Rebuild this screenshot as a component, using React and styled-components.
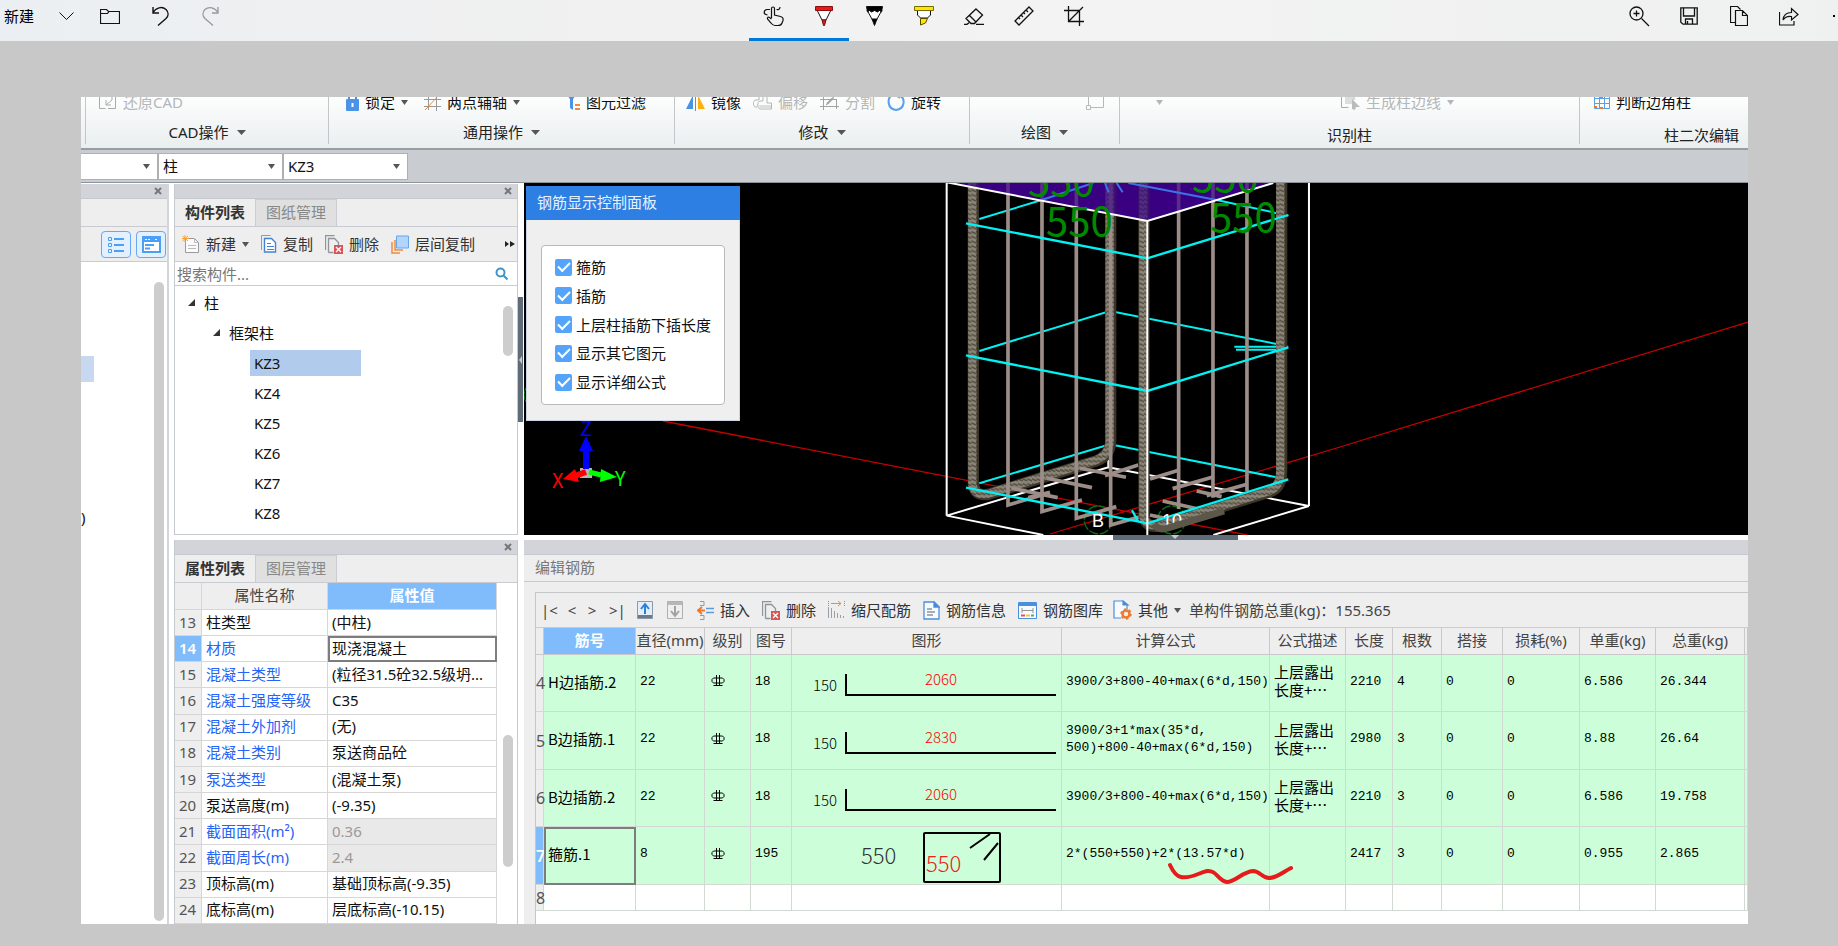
import React from 'react';
import styled, { createGlobalStyle, css } from 'styled-components';

const GlobalStyle = createGlobalStyle`
  * {
    box-sizing: border-box;
  }

  body {
    margin: 0;
    background: #c8c8c8;
    color: #111;
    font-family: 'Noto Sans', 'Noto Sans CJK SC', sans-serif;
    font-size: 15px;
    line-height: 20px;
  }

  button, input, select {
    font: inherit;
    color: inherit;
    margin: 0;
    padding: 0;
    border: 0;
    background: none;
  }

  button {
    white-space: nowrap;
  }

  svg {
    display: block;
    flex: none;
  }
`;

/* ---------- top application bar ---------- */

const AppBar = styled.header`
  display: grid;
  grid-template-columns: minmax(0, 1fr) auto minmax(0, 1fr);
  height: 41px;
  overflow: hidden;
  background: linear-gradient(90deg, #ebeff3 0, #f0f0f0 30%, #f3f3f3 60%, #eff0f0 100%);
`;

const BarGroup = styled.div`
  display: flex;
  justify-content: ${(p) => p.$align || 'flex-start'};
  padding-left: ${(p) => p.$pad || 0}px;
`;

const BarButton = styled.button`
  width: ${(p) => p.$width || 50}px;
  height: 41px;
  padding-bottom: 9px;
  display: flex;
  align-items: center;
  justify-content: center;
`;

const NewButton = styled(BarButton)`
  justify-content: flex-start;
  padding: 0 0 10px 4px;
  color: #000;
`;

const ActivePair = styled.div`
  display: flex;
  height: 41px;
  border-bottom: 3px solid #0078d7;
`;

const MoreButton = styled(BarButton)`
  justify-content: flex-start;
  padding-left: 19px;
  overflow: hidden;
`;

/* ---------- page and ribbon ---------- */

const Canvas = styled.main`
  padding: 56px 90px 22px 81px;
`;

const Sheet = styled.div`
  background: #fff;
  overflow: hidden;
`;

const Ribbon = styled.div`
  display: grid;
  grid-template-columns: 5px 243fr 346fr 295fr 150fr 460fr 168fr;
  height: 53px;
  overflow: hidden;
  border-bottom: 2px solid #999da2;
  background: linear-gradient(#fdfefe, #e9eeee);
`;

const RibbonGroup = styled.section`
  display: flex;
  flex-direction: column;
  justify-content: flex-end;
  gap: 4px;
  height: 47px;
  min-width: 0;
  border-right: ${(p) => (p.$last ? 0 : 1)}px solid #c3c6c8;
`;

const ToolRow = styled.div`
  display: flex;
  align-items: center;
  flex: none;
  height: 28px;
  padding-left: ${(p) => p.$pad}px;
  gap: ${(p) => p.$gap || 0}px;
`;

const RibbonTool = styled.button`
  display: flex;
  align-items: center;
  gap: 6px;
  color: ${(p) => (p.disabled ? '#b4b6b8' : '#111')};
`;

const GroupLabel = styled.div`
  display: flex;
  align-items: center;
  justify-content: ${(p) => p.$align || 'center'};
  flex: none;
  gap: 8px;
  height: 24px;
  padding-top: ${(p) => (p.$low ? 5 : 0)}px;
  padding-right: ${(p) => (p.$align ? 9 : 0)}px;
  white-space: nowrap;
  color: #222;
`;

const ComboBar = styled.div`
  display: flex;
  height: 33px;
  padding-top: 3px;
  background: #c9ccd1;
  border-bottom: 1px solid #8d9499;
`;

const Combo = styled.label`
  display: grid;
  align-items: center;
  width: ${(p) => p.$width}px;
  height: 27px;
  background: #fff;
  border: 1px solid #b0b0b0;
  border-left-width: ${(p) => (p.$first ? 0 : 1)}px;

  select, svg {
    grid-area: 1 / 1;
  }

  select {
    appearance: none;
    padding: 0 0 2px 4px;
    height: 25px;
    outline: 0;
  }

  svg {
    justify-self: end;
    margin-right: 7px;
    pointer-events: none;
  }
`;

/* ---------- docked panels ---------- */

const Workspace = styled.div`
  display: grid;
  grid-template-columns: 93px 344px 6px minmax(0, 1fr);
`;

const Column = styled.div`
  display: flex;
  flex-direction: column;
  min-width: 0;
  padding-top: ${(p) => (p.$flush ? 0 : 1)}px;
`;

const SidePanel = styled.section`
  flex: 1;
  display: flex;
  flex-direction: column;
  margin-right: 5px;
  border-right: 2px solid #d3d5da;
`;

const PanelTitle = styled.div`
  display: flex;
  align-items: center;
  justify-content: flex-end;
  height: 15px;
  padding-right: 5px;
  background: #d2d4da;
  border-bottom: 1px solid #c6c8cd;
`;

const Panel = styled.section`
  display: flex;
  flex-direction: column;
  border: 1px solid #c6c9ce;
  border-width: 0 1px;
  background: #fff;
`;

const TabStrip = styled.div`
  display: flex;
  height: 28px;
  background: #eee;
  border-bottom: 1px solid #c9cbd0;
`;

const Tab = styled.button`
  width: ${(p) => (p.$active ? 80 : 82)}px;
  padding-bottom: 2px;
  font-weight: ${(p) => (p.$active ? 600 : 400)};
  color: ${(p) => (p.$active ? '#333' : '#888')};
  background: ${(p) => (p.$active ? '#eee' : '#e0e0e0')};
  border: solid #cbcdd2;
  border-width: ${(p) => (p.$active ? 0 : '1px 1px 0 1px')};
`;

const PanelTools = styled.div`
  display: flex;
  align-items: center;
  height: 35px;
  padding: 0 4px 0 7px;
  background: #eee;
  border-bottom: 1px solid #c9cbd0;
`;

const PanelTool = styled.button`
  display: flex;
  align-items: center;
  gap: 6px;
  margin-right: ${(p) => p.$after ?? 12}px;
  color: #333;
`;

const ViewToggle = styled.button`
  width: 30px;
  height: 27px;
  margin-right: 5px;
  display: flex;
  align-items: center;
  justify-content: center;
  background: #e3f0ff;
  border: 1px solid #62aaf5;
  border-radius: 4px;
`;

const SideBody = styled.div`
  flex: 1;
  display: flex;
  justify-content: space-between;
  padding: 20px 3px 3px 0;
`;

const SideList = styled.div`
  overflow: hidden;
  padding-top: 74px;
`;

const SideSelected = styled.div`
  width: 13px;
  height: 26px;
  margin-bottom: 125px;
  background: #c8d8f0;
`;

const Thumb = styled.div`
  width: 10px;
  height: ${(p) => p.$height};
  margin-top: ${(p) => p.$top || 0}px;
  flex: none;
  border-radius: 5px;
  background: #cdcdcd;
`;

const SearchRow = styled.label`
  display: flex;
  align-items: center;
  height: 24px;
  padding: 0 9px 0 2px;
  border-bottom: 1px solid #c9cbd0;

  input {
    flex: 1;
    min-width: 0;
    outline: 0;
  }

  input::placeholder {
    color: #777;
    opacity: 1;
  }
`;

const TreeArea = styled.div`
  display: flex;
  justify-content: space-between;
  height: 249px;
  padding: 2px 4px 6px 0;
  border-bottom: 1px solid #c9cbd0;
`;

const Tree = styled.ul`
  list-style: none;
  margin: 0;
  padding: 0;
`;

const TreeRow = styled.li`
  display: flex;
  align-items: center;
  gap: 8px;
  height: 30px;
  padding-left: ${(p) => p.$indent}px;
`;

const TreeLeaf = styled.button`
  width: 111px;
  height: 26px;
  padding-left: 4px;
  text-align: left;
  background: ${(p) => (p.$selected ? '#b1cbec' : 'transparent')};
`;

const PanelGap = styled.div`
  height: 5px;
  background: #fff;
  display: flex;
  justify-content: center;
`;

const Splitter = styled.div`
  padding-top: 114px;
  background: #fff;
`;

const SplitHandle = styled.div`
  width: 5px;
  height: 125px;
  display: flex;
  align-items: center;
  background: #5f6b76;
`;

const GapHandle = styled.div`
  width: 125px;
  height: 5px;
  margin-left: 78px;
  background: #5f6b76;
  display: flex;
  justify-content: center;
`;

/* ---------- property grid ---------- */

const PropertyArea = styled.div`
  display: flex;
  justify-content: space-between;
  height: 341px;
  padding-right: 4px;
`;

const PropertyTable = styled.table`
  width: 322px;
  height: 341px;
  table-layout: fixed;
  border-collapse: separate;
  border-spacing: 0;

  th, td {
    padding: 0 4px 2px;
    overflow: hidden;
    white-space: nowrap;
    text-overflow: ellipsis;
    text-align: left;
    font-weight: 400;
    border: solid #d6d6d6;
    border-width: 0 1px 1px 0;
    line-height: 20px;
  }

  thead th {
    height: 27px;
    text-align: center;
    color: #444;
    background: #eee;
  }
`;

const IndexCell = styled.th`
  && {
    color: ${(p) => (p.$active ? '#fff' : '#555')};
    background: ${(p) => (p.$active ? '#80bbfb' : '#eee')};
    font-weight: ${(p) => (p.$active ? 600 : 400)};
  }
`;

const ActiveHead = styled.th`
  && {
    color: #fff;
    background: #80bbfb;
    font-weight: 600;
  }
`;

const NameCell = styled.td`
  color: ${(p) => (p.$blue ? '#2663f8' : '#111')};
`;

const ValueCell = styled.td`
  color: ${(p) => (p.$readOnly ? '#999' : '#111')};
  background: ${(p) => (p.$readOnly ? '#e9e9e9' : '#fff')};
  ${(p) =>
    p.$editing &&
    css`
      outline: 2px solid #7d7d7d;
      outline-offset: -2px;
    `}
`;

/* ---------- 3D viewport ---------- */

const Viewport = styled.div`
  position: relative;
  height: 352px;
  background: #000;
  overflow: hidden;

  > svg {
    width: 100%;
    height: 352px;
  }
`;

const Dialog = styled.section`
  position: absolute;
  top: 3px;
  left: 2px;
  width: 214px;
  height: 235px;
  background: #efefef;
  border: 1px solid #c9d3e2;
  border-top: 0;
`;

const DialogTitle = styled.h2`
  margin: 0 -1px;
  padding: 6px 11px 8px;
  font-size: 15px;
  font-weight: 400;
  line-height: 20px;
  color: #e6f2ff;
  background: #2d7fe3;
`;

const CheckGroup = styled.div`
  display: flex;
  flex-direction: column;
  justify-content: space-between;
  height: 160px;
  margin: 25px 14px 0;
  padding: 11px 13px 12px;
  background: #fff;
  border: 1px solid #b9b9b9;
  border-radius: 4px;
`;

const Check = styled.label`
  display: flex;
  align-items: center;
  gap: 4px;
  white-space: nowrap;

  input {
    appearance: none;
    display: grid;
    place-items: center;
    width: 17px;
    height: 17px;
    flex: none;
    background: #55a4fb;
    border-radius: 2px;
  }

  input:checked::after {
    content: '';
    width: 10px;
    height: 5px;
    margin-bottom: 3px;
    border: solid #fff;
    border-width: 0 0 2px 2px;
    rotate: -45deg;
  }
`;

/* ---------- rebar editor ---------- */

const Editor = styled.section`
  flex: 1;
  background: #eee;
`;

const EditorTitle = styled.h2`
  margin: 0;
  height: 27px;
  padding: 2px 11px;
  font-size: 15px;
  font-weight: 400;
  line-height: 20px;
  color: #777;
  border-bottom: 1px solid #c6c9ce;
`;

const EditorBox = styled.div`
  margin: 10px 0 0 11px;
  height: 332px;
  border: solid #c4c6ca;
  border-width: 1px 0 0 1px;
  background: #fff;
`;

const EditorTools = styled.div`
  display: flex;
  align-items: center;
  height: 35px;
  padding-left: 5px;
  background: #eee;
  border-bottom: 1px solid #ccc;
  color: #444;
  white-space: nowrap;
  overflow: hidden;
`;

const NavButton = styled.button`
  width: ${(p) => p.$width}px;
  margin-right: ${(p) => p.$after}px;
`;

const RebarTable = styled.table`
  width: 100%;
  table-layout: fixed;
  border-collapse: separate;
  border-spacing: 0;

  th, td {
    padding: 0 4px 4px;
    text-align: left;
    font-weight: 400;
    border: solid #d2d8d2;
    border-width: 0 1px 1px 0;
  }

  thead th {
    height: 27px;
    padding: 0 0 2px;
    text-align: center;
    white-space: nowrap;
    color: #444;
    background: #eee;
    border-color: #c9c9c9;
  }
`;

const RebarRow = styled.tr`
  height: ${(p) => p.$height}px;
  background: ${(p) => (p.$empty ? '#fff' : '#ccffd9')};

  td {
    font-family: 'Liberation Mono', 'Noto Sans CJK SC', monospace;
    font-size: 13px;
    line-height: 17px;
    white-space: pre;
    color: #000;
  }
`;

const RowIndex = styled(IndexCell)`
  && {
    padding: 0;
    font-size: 16px;
    white-space: nowrap;
  }
`;

const BarName = styled.td`
  && {
    font-family: 'Noto Sans CJK SC', sans-serif;
    font-size: 15px;
  }
  ${(p) =>
    p.$selected &&
    css`
      outline: 2px solid #7d7d7d;
      outline-offset: -2px;
    `}
`;

const ShapeCell = styled.td`
  && {
    padding: 0;
  }
`;

const NoteCell = styled.td`
  && {
    font-family: 'Noto Sans CJK SC', sans-serif;
    font-size: 15px;
    line-height: 18px;
  }
`;

const FormulaCell = styled.td`
  position: relative;
`;

const InkMark = styled.svg`
  position: absolute;
  top: 34px;
  left: 104px;
  z-index: 1;
  overflow: visible;
  pointer-events: none;
`;

/* ---------- icons ---------- */

const Icon = ({ w, h, children, ...rest }) => (
  <svg width={w} height={h} viewBox={`0 0 ${w} ${h}`} fill="none" stroke="#111" aria-hidden="true" {...rest}>
    {children}
  </svg>
);

const Caret = ({ size = 7, color = '#555' }) => (
  <Icon w={size} h={5} stroke="none">
    <path d={`M0 0h${size}l-${size / 2} 5z`} fill={color} />
  </Icon>
);

const CloseX = () => (
  <Icon w={8} h={8} stroke="#777" strokeWidth="2">
    <path d="M1 1l6 6M7 1l-6 6" />
  </Icon>
);

const TreeCaret = () => (
  <Icon w={8} h={8} stroke="none">
    <path d="M7 0v7H0z" fill="#333" />
  </Icon>
);

const FolderIcon = () => (
  <Icon w={20} h={17}>
    <path d="M.5 15.500V1.500h6l2 2h11v12zM.5 5.500h7l1.500-2" strokeWidth="1.200" />
  </Icon>
);

const UndoIcon = () => (
  <Icon w={17} h={20} strokeWidth="1.400">
    <path d="M1 1v6h6M1 6.500C4 1.500 10 0 14 3.500c3 3 2.500 6.500 0 9L6 19.500" />
  </Icon>
);

const RedoIcon = () => (
  <Icon w={17} h={20} strokeWidth="1.300" stroke="#999">
    <path d="M16 1v6h-6M16 6.500C13 1.500 7 0 3 3.500c-3 3-2.500 6.500 0 9l8 7" />
  </Icon>
);

const TouchIcon = () => (
  <Icon w={22} h={21} strokeWidth="1.200">
    <path d="M7 3.500H4C.5 4 .5 8 3 8.500l1.500.5M8.500 12V2.500c0-2 3-2 3 0V9l6 1.500c2 .5 3 2 2.500 4l-1 2.500c-.5 2-2 2.500-4 2.500h-3c-2 0-3-1-4-2.500L4.500 13c-.5-1.500 1-2.500 2-1.500l2 1.500" />
    <path d="M13.500 3.500c2 .5 3.500-.5 3.500-2.500" />
  </Icon>
);

const PenIcon = () => (
  <Icon w={18} h={20}>
    <path d="M2 4l5 10h4l5-10z" fill="#fff" />
    <path d="M.5.5h17v4H.5z" fill="#e81b1b" stroke="#8d1010" />
    <path d="M7 14l1.500 5.500h1L11 14z" fill="#e81b1b" stroke="#6d1010" />
  </Icon>
);

const PencilIcon = () => (
  <Icon w={17} h={20}>
    <path d="M1 4l5.500 10h4L16 4z" fill="#fff" />
    <path d="M.5.5h16L15.500 6l-2-1.500-2 1.500-3-1.500-3 1.500-2-1.500-2 1.500zM6 13l2.500 6.500L11 13z" fill="#000" />
  </Icon>
);

const MarkerIcon = () => (
  <Icon w={20} h={20}>
    <path d="M3.500 4v5L6.500 12h7l3-3V4" fill="#fff" />
    <path d="M.5.5h19v4H.5z" fill="#ffe600" stroke="#776a00" />
    <path d="M6.500 12.500v6.500l5-2 2-4.500z" fill="#ffe600" stroke="#554c00" />
  </Icon>
);

const EraserIcon = () => (
  <Icon w={21} h={17} strokeWidth="1.300">
    <path d="M12 1l6.500 6-8 8.500H7L2 10.500zM5.500 7.500L12 14M12 16.300h8M0 16.300h3l2-1.500" />
  </Icon>
);

const RulerIcon = () => (
  <Icon w={20} h={20}>
    <path d="M15 1l4 4L5 19l-4-4zM12 4l2 2M9.500 6.500L11 8M7 9l2 2M4.500 11.500L6 13" strokeWidth="1.300" />
  </Icon>
);

const CropIcon = () => (
  <Icon w={20} h={20}>
    <path d="M4.500 0v15.500H20M0 4.500h15.500V20M19 1L4.500 15.500" strokeWidth="1.300" />
  </Icon>
);

const ZoomIcon = () => (
  <Icon w={21} h={21} strokeWidth="1.300">
    <circle cx="7.500" cy="7.500" r="6.500" />
    <path d="M12.500 12.500L20 20M7.500 4.500v6M4.500 7.500h6" />
  </Icon>
);

const SaveIcon = () => (
  <Icon w={18} h={18} strokeWidth="1.300">
    <path d="M.8.8h16.400v16.400H3l-2.200-2zM3.500 1v8h11V1M5.500 17v-5h7v5M7.500 17v-3" />
  </Icon>
);

const PagesIcon = () => (
  <Icon w={18} h={20} strokeWidth="1.200">
    <path d="M5.500 16.500h-5V.5h7l3 3M5.500 4.500h7l5 5v10h-12zM12.500 4.500v5h5" />
  </Icon>
);

const ShareIcon = () => (
  <Icon w={20} h={19} strokeWidth="1.200">
    <path d="M.5 5v13h14.500v-4M4 13c.5-5 3.500-7.500 8.500-7.500V1.500L19 7.500l-6.500 5.500V9.500C8.500 9 6 10 4 13z" />
  </Icon>
);

const RestoreIcon = () => (
  <Icon w={18} h={16} stroke="#aaa">
    <path d="M.5 1v13.500h6M9 14.500h7.500V2M13 0v6l-6 5M7 6v5h5" />
  </Icon>
);

const LockIcon = () => (
  <Icon w={13} h={18} stroke="#4a93e6" strokeWidth="2">
    <path d="M3 8V4c0-4 7-4 7 0v4" />
    <rect x="0" y="6" width="13" height="12" rx="1" fill="#4a93e6" stroke="none" />
    <path d="M6.500 10v4" stroke="#fff" />
  </Icon>
);

const AxisIcon = () => (
  <Icon w={17} h={18} stroke="#999">
    <path d="M4.500 3v14M12.500 1v17M0 6.500h17M0 13.500h17" />
    <path d="M1 17L15 2" stroke="#ee8a40" />
  </Icon>
);

const FilterIcon = () => (
  <Icon w={14} h={18} stroke="none">
    <path d="M0 1h11L7 6v11l-3-2V6z" fill="#4a93e6" />
    <path d="M9 11h5v2H9zM9 15h5v2H9z" fill="#f08a3c" />
  </Icon>
);

const MirrorIcon = () => (
  <Icon w={19} h={18} stroke="none">
    <path d="M7 2v14H0z" fill="#4a93e6" />
    <path d="M12 2v14h7z" fill="#ffb010" />
    <path d="M9 0h1v18H9z" fill="#888" />
  </Icon>
);

const OffsetIcon = () => (
  <Icon w={19} h={18} stroke="#b4b4b4">
    <path d="M6 2v5H2c-2 1-2 6 0 7h2M10 2v6H7c-3 1-3 7 0 8h11.500v-6H14V2" />
    <path d="M6 12h12v4H7z" fill="#ddd" stroke="none" />
  </Icon>
);

const SplitIcon = () => (
  <Icon w={19} h={18} stroke="#a2a2a2">
    <path d="M0 6.500h17M0 13.500h19M3.500 4v13M16.500 6v10M6 12L17 1" />
    <path d="M7 11l6-6" strokeWidth="2" />
  </Icon>
);

const RotateIcon = () => (
  <Icon w={18} h={18} stroke="#5aa0ea" strokeWidth="2">
    <path d="M12 2c7 3 6 14-3 15C0 16 0 5 5 2" />
    <path d="M9 2l4 3" stroke="#ee8a40" />
  </Icon>
);

const PolyIcon = () => (
  <Icon w={20} h={18} stroke="#b8b8b8">
    <path d="M2.500 1v12M5 14.500h12.500V2" />
    <path d="M.5 12.500h4v4h-4z" />
  </Icon>
);

const PickIcon = () => (
  <Icon w={19} h={18} stroke="#aaa">
    <path d="M.5 1v13.500h7M3 1h10v6" />
    <path d="M4 1h8v10H4z" fill="#ddd" stroke="none" />
    <path d="M11 6l8 8h-4l-1 3-3-1z" fill="#bbb" stroke="none" />
  </Icon>
);

const GridIcon = () => (
  <Icon w={16} h={18} stroke="#5b9fe8">
    <path d="M.5 1v14.500h15V1M5.500 1v14M10.500 1v14M0 5.500h16M0 10.500h16" />
    <path d="M0 14h3M6 4h3M6 15h3M8 1v2" stroke="#ee7a30" strokeWidth="2" />
  </Icon>
);

const ListIcon = () => (
  <Icon w={16} h={17} stroke="#4ba0f5">
    <path d="M.5 1.500h3v3h-3zM.5 7.500h3v3h-3zM.5 13.500h3v3h-3z" />
    <path d="M6 3h10M6 9h10M6 15h10" strokeWidth="2" />
  </Icon>
);

const CardIcon = () => (
  <Icon w={19} h={17} stroke="#4ba0f5">
    <path d="M1 1h17v15H1z" strokeWidth="2" fill="#fff" />
    <path d="M1 3.500h17" strokeWidth="5" />
    <path d="M3 3.500h6M13 3.500h3" stroke="#fff" strokeDasharray="2 1" />
    <path d="M3 9h9M3 12.500h5" strokeWidth="2" />
  </Icon>
);

const NewDocIcon = () => (
  <Icon w={18} h={18} stroke="#999">
    <path d="M3.500 3.500h9l4 4v10h-13z" fill="#fbfbfb" />
    <path d="M12.500 3.500v4h4M6 10.500h8M6 13.500h8" stroke="#bbb" />
    <path d="M3 0v7M0 3.500h7M.5 1l5.500 5M6 1L.5 6" stroke="#ffa02c" />
  </Icon>
);

const CopyIcon = () => (
  <Icon w={16} h={18} stroke="#999">
    <path d="M.5 15V.5h9" />
    <path d="M3.500 3.500h7l4 4v9.500h-11z" stroke="#4285d6" fill="#fff" strokeWidth="1.400" />
    <path d="M6 8.500h4M6 11.500h7M6 14.500h7" stroke="#4285d6" />
  </Icon>
);

const DeleteIcon = () => (
  <Icon w={18} h={19} stroke="#8d959b">
    <path d="M.5 15V.5h9M3.500 17.500V3.500h6l4 4v3M3.500 17.500h5" strokeWidth="1.300" />
    <path d="M9 10h9v9H9z" fill="#d9535b" stroke="none" />
    <path d="M11 12l5 5M16 12l-5 5" stroke="#fff" strokeWidth="1.300" />
  </Icon>
);

const LayersIcon = () => (
  <Icon w={18} h={19} stroke="#ee8a40" strokeWidth="1.500">
    <path d="M1 7v11h8M4 5v10h8" />
    <path d="M5.500 1h12v12h-12z" stroke="#6aa5e8" fill="#b3d4ff" strokeWidth="1" />
  </Icon>
);

const MoreIcon = () => (
  <Icon w={10} h={8} stroke="none">
    <path d="M0 1l4 3-4 3zM5 1l5 3-5 3z" fill="#222" />
  </Icon>
);

const SearchIcon = () => (
  <Icon w={13} h={13} stroke="#3d94cc" strokeWidth="2">
    <circle cx="5.500" cy="5.500" r="4" />
    <path d="M8.500 8.500l4 4" />
  </Icon>
);

const UpIcon = () => (
  <Icon w={16} h={18} stroke="#8b9bab">
    <path d="M.5.5h15v17H.5z" fill="#e4eef8" />
    <path d="M1 14h14v3H1z" fill="#6b7b8b" stroke="none" />
    <path d="M8 13V4M4 8l4-5 4 5" stroke="#2a80d8" strokeWidth="2" />
  </Icon>
);

const DownIcon = () => (
  <Icon w={16} h={18} stroke="#b0b0b0">
    <path d="M.5.5h15v17H.5z" fill="#efefef" />
    <path d="M1 1h14v3H1z" fill="#b8b8b8" stroke="none" />
    <path d="M8 5v9M4 10l4 5 4-5" stroke="#a2a2a2" strokeWidth="2" />
  </Icon>
);

const InsertIcon = () => (
  <Icon w={17} h={19} stroke="#999">
    <path d="M3 .5h4v4H3M3 14.500h4v4H3" />
    <path d="M9 7.500h8M9 11.500h8" stroke="#5a9ce0" strokeWidth="1.500" />
    <path d="M8 9.500H2M5 6L1 9.500 5 13" stroke="#f07828" strokeWidth="2" />
  </Icon>
);

const ScaleIcon = () => (
  <Icon w={17} h={18} stroke="#9aa0a8">
    <path d="M.5 6v11M3.500 7v10M6.500 10v7M9.500 12v5M12.500 14v3M15.500 15v2" />
    <path d="M.5 0v5M16.500 0v5" stroke="#5a9ce0" strokeDasharray="1 1" />
    <path d="M3 2.500h10M10 0l3 2.500L10 5" stroke="#ee8a40" />
  </Icon>
);

const InfoIcon = () => (
  <Icon w={17} h={19} stroke="#4c8fdc" strokeWidth="1.300">
    <path d="M1 1h10l5 5v12H1z" fill="#f7fbff" />
    <path d="M11 1v5h5z" fill="#3d85d8" />
    <path d="M4 8h5M4 11h8M4 14h6" stroke="#8d959b" />
  </Icon>
);

const LibraryIcon = () => (
  <Icon w={19} h={17} stroke="#4c8fdc">
    <path d="M.5.5h18v16H.5z" fill="#f7fbff" />
    <path d="M1 2.500h17" strokeWidth="3" />
    <path d="M4 6v5M15 6v5M4 8.500h11" stroke="#8d959b" />
    <path d="M3 13.500h4" stroke="#e35050" strokeWidth="2" />
    <path d="M8 13.500h4" stroke="#ffc030" strokeWidth="2" />
    <path d="M13 13.500h3" stroke="#50b060" strokeWidth="2" />
  </Icon>
);

const OtherIcon = () => (
  <Icon w={19} h={20} stroke="#4c8fdc" strokeWidth="1.200">
    <path d="M8 18H1V1h9l4 4v4" fill="#f7fbff" />
    <path d="M10 1v4h5z" fill="#3d85d8" />
    <circle cx="13" cy="14" r="3.500" stroke="#f07828" strokeWidth="2.500" />
    <circle cx="13" cy="14" r="5" stroke="#f07828" strokeWidth="1.500" strokeDasharray="2.500 2.700" />
  </Icon>
);

const GradeIcon = () => (
  <Icon w={16} h={12} stroke="#000">
    <path d="M4.500 3h9l1.500 1.500v2L13.500 8h-9L3 6.500v-2z" strokeLinejoin="round" />
    <path d="M7.500 0v11M10.500 0v11M4.500 10.500h9" />
  </Icon>
);

/* ---------- drawings ---------- */

const thinBars = [[264, 990, 384, 955], [366, 1010, 486, 975], [469, 1030, 589, 995], [572, 1050, 665, 1024]];
const shortBars = [[776, 1002], [879, 968], [981, 948]];
const floorBars = [
  [275, 940, 413, 968], [380, 910, 516, 938], [480, 880, 618, 907], [325, 968, 390, 952],
  [555, 902, 655, 870], [690, 912, 776, 886], [758, 941, 879, 906], [860, 962, 981, 928],
  [728, 978, 862, 1008], [830, 948, 905, 965], [690, 1020, 735, 1030],
];

const Scene = () => (
  <svg viewBox="0 0 1224 352" preserveAspectRatio="xMinYMin slice" fill="none" role="img" aria-label="柱钢筋三维">
    <defs>
      <pattern id="rib" width="14" height="14" patternUnits="userSpaceOnUse">
        <path d="M0 0h14v14H0z" fill="#8a8478" />
        <path d="M0 2l14 6M0 16l14 6M0 -12l14 6" stroke="#4f493b" strokeWidth="4" />
      </pattern>
    </defs>
    <path d="M139 238L723 352M526 351L816 264L1224 139" stroke="#c60000" strokeWidth="1.300" />
    <path d="M2 205q-4 7 0 14" stroke="#008000" />
    {/* column model, drawn in a three times finer unit */}
    <g transform="translate(396 -8) scale(.3333)">
      <g stroke="#0a6d12" strokeWidth="4" strokeDasharray="28 5">
        <circle cx="535" cy="1035" r="42" />
        <circle cx="755" cy="1035" r="42" />
      </g>
      <path d="M90 24L682 138L1060 24z" fill="#3c0078" />
      <path d="M80 1022L565 877L1167 993M565 877V850M80 1022L370 1080M1167 993L880 1080" stroke="#fff" strokeWidth="6" />
      <path d="M178 132L365 75M890 75L1105 122M178 528L570 408L1070 507M943 515H1105M948 524H1095M178 925L570 808L1070 907" stroke="#00f2f2" strokeWidth="6" />
      <path d="M160 0V925Q162 965 205 958L515 862Q570 848 572 800V0" stroke="#3d3628" strokeWidth="34" />
      <path d="M157 0V925Q160 965 205 956L515 860Q567 846 569 800V0" stroke="url(#rib)" strokeWidth="25" />
      <g stroke="#9d8d88" strokeWidth="11">
        {thinBars.map(([x, y, x2, y2]) => (
          <path key={x} d={`M${x} 24V${y}L${x2} ${y2}`} />
        ))}
        {shortBars.map(([x, y]) => (
          <path key={x} d={`M${x} 24V${y}`} />
        ))}
        {floorBars.map(([x, y, x2, y2]) => (
          <path key={`${x}-${y}`} d={`M${x} ${y}L${x2} ${y2}`} />
        ))}
      </g>
      <path d="M1085 0V890Q1085 940 1045 952L730 1050Q676 1066 672 1020V0" stroke="#3d3628" strokeWidth="34" />
      <path d="M1081 0V890Q1081 938 1043 950L730 1048Q674 1062 670 1020V0" stroke="url(#rib)" strokeWidth="25" />
      <path d="M90 24L682 138L1060 24z" fill="#3a0088" fillOpacity=".68" />
      <path d="M365 75L520 24M625 24L890 75M555 24L566 52M590 24L608 52" stroke="#3b74e8" strokeWidth="6" />
      <path d="M138 145L682 250L1105 120M138 541L682 648L1105 517M138 938L682 1045L1105 913M636 1006L655 1040" stroke="#00f2f2" strokeWidth="7" />
      <path d="M80 24V1022M1167 24V993M80 22L682 138L1060 24M682 138V1080" stroke="#fff" strokeWidth="6" />
    </g>
    <g fill="#008a00" fontFamily="Noto Sans CJK SC, sans-serif" fontSize="40" fontWeight="400">
      <text x="504" y="13">550</text>
      <text x="522" y="53">550</text>
      <text x="668" y="9">550</text>
      <text x="686" y="49">550</text>
    </g>
    <text x="568" y="344" fill="#fff" fontSize="18" fontFamily="Liberation Sans, sans-serif">B</text>
    <text x="638" y="344" fill="#fff" fontSize="18" fontFamily="Liberation Sans, sans-serif">10</text>
    <path d="M630 341Q634 348 644 345L700 328" stroke="#5d574a" strokeWidth="7" />
    {/* axis gizmo */}
    <path d="M56 285h12v10H56z" fill="#b5b5b5" />
    <path d="M62 286V265" stroke="#00f" strokeWidth="6" />
    <path d="M55 268h14l-7-15z" fill="#00f" />
    <path d="M62 289L48 294" stroke="#f00" strokeWidth="6" />
    <path d="M39 296l12-10 4 13z" fill="#f00" />
    <path d="M65 289l12 3" stroke="#0f0" strokeWidth="5" />
    <path d="M93 294l-16-8-1 13z" fill="#0f0" />
    <g fontFamily="Noto Sans CJK SC, sans-serif" fontSize="20">
      <text x="56" y="253" fill="#00f">Z</text>
      <text x="28" y="305" fill="#f00">X</text>
      <text x="91" y="303" fill="#0f0">Y</text>
    </g>
  </svg>
);

const LShape = ({ length }) => (
  <svg width="269" height="56" viewBox="0 0 269 56" fontFamily="Noto Sans CJK SC, sans-serif" fontSize="15" fontWeight="300">
    <text x="21" y="36">150</text>
    <text x="133" y="30" fill="#f00">{length}</text>
    <path d="M54 19v21h210" fill="none" stroke="#000" strokeWidth="2" />
  </svg>
);

const StirrupShape = () => (
  <svg width="269" height="56" viewBox="0 0 269 56" fontFamily="Noto Sans CJK SC, sans-serif" fontSize="22" fontWeight="300">
    <text x="69" y="36" fill="#333">550</text>
    <text x="134" y="44" fill="#f02020">550</text>
    <rect x="132" y="5" width="76" height="49" rx="1" fill="none" stroke="#000" strokeWidth="2" />
    <path d="M178 20l20-14M192 32l14-17" stroke="#000" strokeWidth="2" />
  </svg>
);

/* ---------- data ---------- */

const properties = [
  { no: 13, name: '柱类型', value: '(中柱)' },
  { no: 14, name: '材质', value: '现浇混凝土', blue: true, editing: true },
  { no: 15, name: '混凝土类型', value: '(粒径31.5砼32.5级坍...', blue: true },
  { no: 16, name: '混凝土强度等级', value: 'C35', blue: true },
  { no: 17, name: '混凝土外加剂', value: '(无)', blue: true },
  { no: 18, name: '混凝土类别', value: '泵送商品砼', blue: true },
  { no: 19, name: '泵送类型', value: '(混凝土泵)', blue: true },
  { no: 20, name: '泵送高度(m)', value: '(-9.35)' },
  { no: 21, name: '截面面积(m²)', value: '0.36', blue: true, readOnly: true },
  { no: 22, name: '截面周长(m)', value: '2.4', blue: true, readOnly: true },
  { no: 23, name: '顶标高(m)', value: '基础顶标高(-9.35)' },
  { no: 24, name: '底标高(m)', value: '层底标高(-10.15)' },
];

const columns = [
  ['', 8], ['筋号', 92], ['直径(mm)', 69], ['级别', 46], ['图号', 41], ['图形', 270], ['计算公式', 208], ['公式描述', 76],
  ['长度', 47], ['根数', 49], ['搭接', 61], ['损耗(%)', 77], ['单重(kg)', 76], ['总重(kg)', 89],
];

const note = '上层露出\n长度+…';

const bars = [
  { no: 4, name: 'H边插筋.2', d: 22, shape: 18, size: 2060, formula: '3900/3+800-40+max(6*d,150)', note, rest: [2210, 4, 0, 0, '6.586', '26.344'] },
  { no: 5, name: 'B边插筋.1', d: 22, shape: 18, size: 2830, formula: '3900/3+1*max(35*d,\n500)+800-40+max(6*d,150)', note, rest: [2980, 3, 0, 0, '8.88', '26.64'] },
  { no: 6, name: 'B边插筋.2', d: 22, shape: 18, size: 2060, formula: '3900/3+800-40+max(6*d,150)', note, rest: [2210, 3, 0, 0, '6.586', '19.758'] },
  { no: 7, name: '箍筋.1', d: 8, shape: 195, formula: '2*(550+550)+2*(13.57*d)', note: '', rest: [2417, 3, 0, 0, '0.955', '2.865'], selected: true },
];

const checks = ['箍筋', '插筋', '上层柱插筋下插长度', '显示其它图元', '显示详细公式'];

/* ---------- sections ---------- */

const TopBar = () => (
  <AppBar>
    <BarGroup>
      <NewButton $width={48}>新建</NewButton>
      <BarButton $width={37} aria-label="更多新建">
        <Icon w={15} h={9}><path d="M.5.5l7 7 7-7" /></Icon>
      </BarButton>
      <BarButton aria-label="打开"><FolderIcon /></BarButton>
      <BarButton aria-label="撤消"><UndoIcon /></BarButton>
      <BarButton aria-label="恢复"><RedoIcon /></BarButton>
    </BarGroup>
    <BarGroup $pad={10}>
      <ActivePair>
        <BarButton aria-label="触摸书写"><TouchIcon /></BarButton>
        <BarButton aria-label="圆珠笔"><PenIcon /></BarButton>
      </ActivePair>
      <BarButton aria-label="铅笔"><PencilIcon /></BarButton>
      <BarButton aria-label="荧光笔"><MarkerIcon /></BarButton>
      <BarButton aria-label="橡皮擦"><EraserIcon /></BarButton>
      <BarButton aria-label="标尺"><RulerIcon /></BarButton>
      <BarButton aria-label="裁剪"><CropIcon /></BarButton>
    </BarGroup>
    <BarGroup $align="flex-end">
      <BarButton aria-label="缩放"><ZoomIcon /></BarButton>
      <BarButton aria-label="保存"><SaveIcon /></BarButton>
      <BarButton aria-label="复制"><PagesIcon /></BarButton>
      <BarButton aria-label="共享"><ShareIcon /></BarButton>
      <MoreButton $width={24} aria-label="更多">
        <Icon w={14} h={2} stroke="none"><path d="M0 0h2v2H0zM6 0h2v2H6zM12 0h2v2h-2z" fill="#000" /></Icon>
      </MoreButton>
    </BarGroup>
  </AppBar>
);

const RibbonBar = () => (
  <Ribbon>
    <RibbonGroup />
    <RibbonGroup>
      <ToolRow $pad={13}>
        <RibbonTool disabled><RestoreIcon />还原CAD</RibbonTool>
      </ToolRow>
      <GroupLabel>CAD操作<Caret size={9} /></GroupLabel>
    </RibbonGroup>
    <RibbonGroup>
      <ToolRow $pad={17} $gap={16}>
        <RibbonTool><LockIcon />锁定<Caret /></RibbonTool>
        <RibbonTool><AxisIcon />两点辅轴<Caret /></RibbonTool>
        <ToolRow $pad={30}>
          <RibbonTool><FilterIcon />图元过滤</RibbonTool>
        </ToolRow>
      </ToolRow>
      <GroupLabel>通用操作<Caret size={9} /></GroupLabel>
    </RibbonGroup>
    <RibbonGroup>
      <ToolRow $pad={11} $gap={12}>
        <RibbonTool><MirrorIcon />镜像</RibbonTool>
        <RibbonTool disabled><OffsetIcon />偏移</RibbonTool>
        <RibbonTool disabled><SplitIcon />分割</RibbonTool>
        <RibbonTool><RotateIcon />旋转</RibbonTool>
      </ToolRow>
      <GroupLabel>修改<Caret size={9} /></GroupLabel>
    </RibbonGroup>
    <RibbonGroup>
      <ToolRow $pad={116}>
        <RibbonTool disabled aria-label="多段线"><PolyIcon /></RibbonTool>
      </ToolRow>
      <GroupLabel>绘图<Caret size={9} /></GroupLabel>
    </RibbonGroup>
    <RibbonGroup>
      <ToolRow $pad={36} $gap={178}>
        <RibbonTool disabled aria-label="展开"><Caret color="#b4b6b8" /></RibbonTool>
        <RibbonTool disabled><PickIcon />生成柱边线<Caret color="#b4b6b8" /></RibbonTool>
      </ToolRow>
      <GroupLabel $low>识别柱</GroupLabel>
    </RibbonGroup>
    <RibbonGroup $last>
      <ToolRow $pad={14}>
        <RibbonTool><GridIcon />判断边角柱</RibbonTool>
      </ToolRow>
      <GroupLabel $low $align="flex-end">柱二次编辑</GroupLabel>
    </RibbonGroup>
  </Ribbon>
);

const ComponentPanel = () => (
  <Panel>
    <PanelTitle><CloseX /></PanelTitle>
    <TabStrip>
      <Tab $active>构件列表</Tab>
      <Tab>图纸管理</Tab>
    </TabStrip>
    <PanelTools>
      <PanelTool><NewDocIcon />新建<Caret /></PanelTool>
      <PanelTool><CopyIcon />复制</PanelTool>
      <PanelTool><DeleteIcon />删除</PanelTool>
      <PanelTool $after={30}><LayersIcon />层间复制</PanelTool>
      <PanelTool $after={0} aria-label="更多"><MoreIcon /></PanelTool>
    </PanelTools>
    <SearchRow>
      <input type="text" placeholder="搜索构件..." aria-label="搜索构件" />
      <SearchIcon />
    </SearchRow>
    <TreeArea>
      <Tree>
        <TreeRow $indent={13}><TreeCaret />柱</TreeRow>
        <TreeRow $indent={38}><TreeCaret />框架柱</TreeRow>
        {['KZ3', 'KZ4', 'KZ5', 'KZ6', 'KZ7', 'KZ8'].map((name, i) => (
          <TreeRow key={name} $indent={75}>
            <TreeLeaf $selected={i === 0}>{name}</TreeLeaf>
          </TreeRow>
        ))}
      </Tree>
      <Thumb $height="50px" $top={18} />
    </TreeArea>
  </Panel>
);

const PropertyPanel = () => (
  <Panel>
    <PanelTitle><CloseX /></PanelTitle>
    <TabStrip>
      <Tab $active>属性列表</Tab>
      <Tab>图层管理</Tab>
    </TabStrip>
    <PropertyArea>
      <PropertyTable>
        <colgroup>
          <col width="27" />
          <col width="126" />
          <col />
        </colgroup>
        <thead>
          <tr>
            <th />
            <th>属性名称</th>
            <ActiveHead>属性值</ActiveHead>
          </tr>
        </thead>
        <tbody>
          {properties.map((p) => (
            <tr key={p.no}>
              <IndexCell $active={p.editing}>{p.no}</IndexCell>
              <NameCell $blue={p.blue}>{p.name}</NameCell>
              <ValueCell $editing={p.editing} $readOnly={p.readOnly}>{p.value}</ValueCell>
            </tr>
          ))}
        </tbody>
      </PropertyTable>
      <Thumb $height="132px" $top={152} />
    </PropertyArea>
  </Panel>
);

const RebarEditor = () => (
  <Editor>
    <PanelTitle />
    <EditorTitle>编辑钢筋</EditorTitle>
    <EditorBox>
      <EditorTools>
        <NavButton $width={16} $after={9}>|&lt;</NavButton>
        <NavButton $width={12} $after={8}>&lt;</NavButton>
        <NavButton $width={12} $after={11}>&gt;</NavButton>
        <NavButton $width={16} $after={12}>&gt;|</NavButton>
        <PanelTool $after={14} aria-label="上移"><UpIcon /></PanelTool>
        <PanelTool $after={14} aria-label="下移"><DownIcon /></PanelTool>
        <PanelTool><InsertIcon />插入</PanelTool>
        <PanelTool><DeleteIcon />删除</PanelTool>
        <PanelTool><ScaleIcon />缩尺配筋</PanelTool>
        <PanelTool><InfoIcon />钢筋信息</PanelTool>
        <PanelTool $after={10}><LibraryIcon />钢筋图库</PanelTool>
        <PanelTool $after={8}><OtherIcon />其他<Caret /></PanelTool>
        <span>单构件钢筋总重(kg)：155.365</span>
      </EditorTools>
      <RebarTable>
        <colgroup>
          {columns.map(([name, width]) => (
            <col key={name} width={width} />
          ))}
          <col />
        </colgroup>
        <thead>
          <tr>
            {columns.map(([name]) =>
              name === '筋号' ? <ActiveHead key={name}>{name}</ActiveHead> : <th key={name}>{name}</th>
            )}
            <th />
          </tr>
        </thead>
        <tbody>
          {bars.map((bar, i) => (
            <RebarRow key={bar.no} $height={i % 2 ? 58 : 57}>
              <RowIndex $active={bar.selected}>{bar.no}</RowIndex>
              <BarName $selected={bar.selected}>{bar.name}</BarName>
              <td>{bar.d}</td>
              <td><GradeIcon /></td>
              <td>{bar.shape}</td>
              <ShapeCell>{bar.size ? <LShape length={bar.size} /> : <StirrupShape />}</ShapeCell>
              <FormulaCell>
                {bar.formula}
                {bar.selected && (
                  <InkMark width="130" height="30" viewBox="0 0 130 30" fill="none" stroke="#e61c1c" strokeWidth="4" strokeLinecap="round">
                    <path d="M4 4Q9 15 15 16C25 18 32 12 41 10C51 9 52 20 61 21C69 21 76 11 87 10C94 10 96 17 103 17C111 17 117 11 125 7" />
                  </InkMark>
                )}
              </FormulaCell>
              <NoteCell>{bar.note}</NoteCell>
              {bar.rest.map((v, n) => (
                <td key={n}>{v}</td>
              ))}
              <td />
            </RebarRow>
          ))}
          <RebarRow $height={26} $empty>
            <RowIndex>8</RowIndex>
            {columns.map(([name]) => (
              <td key={name} />
            ))}
          </RebarRow>
        </tbody>
      </RebarTable>
    </EditorBox>
  </Editor>
);

const App = () => {
  return (
    <>
      <GlobalStyle />
      <TopBar />
      <Canvas>
        <Sheet>
          <RibbonBar />
          <ComboBar>
            <Combo $width={77} $first>
              <select aria-label="楼层"><option> </option></select>
              <Caret />
            </Combo>
            <Combo $width={125}>
              <select aria-label="构件类型"><option>柱</option></select>
              <Caret />
            </Combo>
            <Combo $width={125}>
              <select aria-label="构件"><option>KZ3</option></select>
              <Caret />
            </Combo>
          </ComboBar>
          <Workspace>
            <Column>
              <SidePanel>
                <PanelTitle><CloseX /></PanelTitle>
                <TabStrip />
                <PanelTools>
                  <ToolRow $pad={13}>
                    <ViewToggle aria-label="列表"><ListIcon /></ViewToggle>
                    <ViewToggle aria-label="卡片"><CardIcon /></ViewToggle>
                  </ToolRow>
                </PanelTools>
                <SideBody>
                  <SideList>
                    <SideSelected />
                    <span>)</span>
                  </SideList>
                  <Thumb $height="100%" />
                </SideBody>
              </SidePanel>
            </Column>
            <Column>
              <ComponentPanel />
              <PanelGap />
              <PropertyPanel />
            </Column>
            <Splitter>
              <SplitHandle>
                <Icon w={4} h={8} stroke="none"><path d="M4 0v8L1 4z" fill="#c5cad0" /></Icon>
              </SplitHandle>
            </Splitter>
            <Column $flush>
              <Viewport>
                <Scene />
                <Dialog>
                  <DialogTitle>钢筋显示控制面板</DialogTitle>
                  <CheckGroup>
                    {checks.map((text) => (
                      <Check key={text}>
                        <input type="checkbox" defaultChecked />
                        {text}
                      </Check>
                    ))}
                  </CheckGroup>
                </Dialog>
              </Viewport>
              <PanelGap>
                <GapHandle>
                  <Icon w={8} h={4} stroke="none"><path d="M0 0h8L4 4z" fill="#c5cad0" /></Icon>
                </GapHandle>
              </PanelGap>
              <RebarEditor />
            </Column>
          </Workspace>
        </Sheet>
      </Canvas>
    </>
  );
};

export default App;
